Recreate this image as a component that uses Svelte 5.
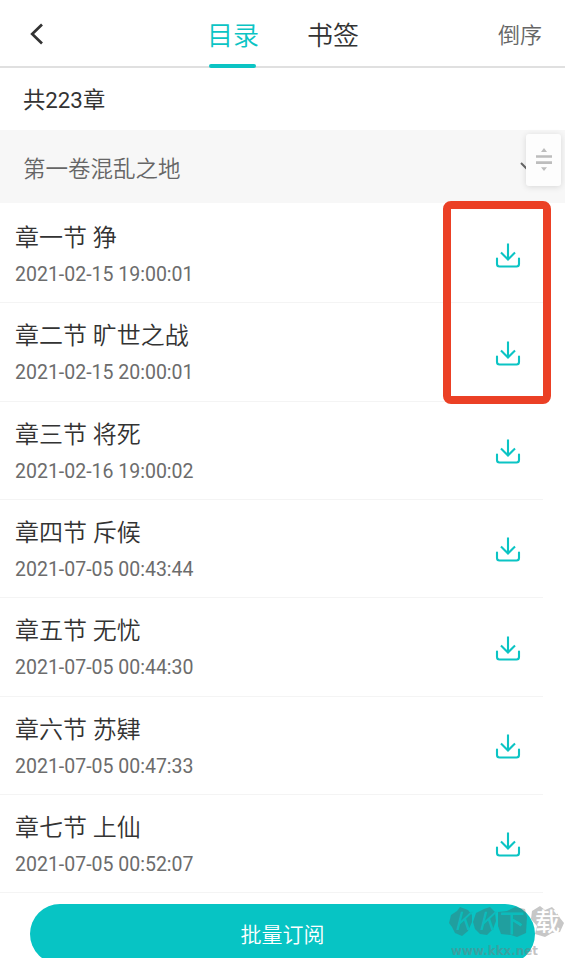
<script>
  let activeTab = $state('catalog');

  const tabs = [
    { id: 'catalog', label: '目录' },
    { id: 'bookmark', label: '书签' }
  ];

  const chapters = [
    { title: '章一节 狰', time: '2021-02-15 19:00:01' },
    { title: '章二节 旷世之战', time: '2021-02-15 20:00:01' },
    { title: '章三节 将死', time: '2021-02-16 19:00:02' },
    { title: '章四节 斥候', time: '2021-07-05 00:43:44' },
    { title: '章五节 无忧', time: '2021-07-05 00:44:30' },
    { title: '章六节 苏肄', time: '2021-07-05 00:47:33' },
    { title: '章七节 上仙', time: '2021-07-05 00:52:07' }
  ];
</script>

<div class="page">
  <header class="header">
    <button class="back" aria-label="返回">
      <svg width="14" height="22" viewBox="0 0 14 22" fill="none">
        <path d="M12 1.5L2.2 11L12 20.5" stroke="#333" stroke-width="2.7" />
      </svg>
    </button>
    <nav class="tabs">
      {#each tabs as tab}
        <button class="tab" class:active={activeTab === tab.id} onclick={() => (activeTab = tab.id)}>
          {tab.label}
        </button>
      {/each}
    </nav>
    <button class="order">倒序</button>
  </header>

  <div class="count">共223章</div>

  <div class="volume">
    <span>第一卷混乱之地</span>
    <svg class="chevron" width="18" height="10" viewBox="0 0 18 10" fill="none">
      <path d="M1 1L9 9L17 1" stroke="#666" stroke-width="2" />
    </svg>
    <div class="scroller">
      <svg width="16" height="24" viewBox="0 0 16 24" fill="#bdbdbd">
        <path d="M8 0L11 4H5zM0 7.2h16v2.6H0zM0 13.3h16v2.6H0zM5 19.2h6L8 23z" />
      </svg>
    </div>
  </div>

  <main class="list">
    {#each chapters as chapter}
      <div class="chapter">
        <div>
          <div class="title">{chapter.title}</div>
          <div class="time">{chapter.time}</div>
        </div>
        <button class="download" aria-label="下载">
          <svg width="26" height="26" viewBox="0 0 26 26" fill="none" stroke="#0bc4c4" stroke-width="2.1">
            <path d="M13 0.5V16.5M6 9.5L13 16.5L20 9.5" />
            <path d="M2 15.5V21Q2 23.5 4.5 23.5H21.5Q24 23.5 24 21V15.5" stroke-linecap="round" />
          </svg>
        </button>
      </div>
    {/each}
    <div class="highlight"></div>
  </main>

  <footer class="footer">
    <button class="subscribe">批量订阅</button>
    <div class="watermark">
      <svg width="115" height="56" viewBox="0 0 115 56">
        <g fill="#555" fill-opacity="0.33">
          <path d="M2 9L8 5L11 1L19 4L23 9L23 16L19 25L13 30L6 27L3 21L0 17z" />
          <path d="M27 7L35 3L41 1L46 6L47 15L44 23L38 29L31 28L26 23L24 16z" />
          <path d="M49 6L58 5L66 1L76 3L78 11L77 27L68 31L62 29L52 28L49 20z" />
          <path d="M83 5L91 0L96 4L103 1L107 5L111 12L115 17L111 26L103 27L96 31L86 28L88 20L82 13z" />
        </g>
        <g class="name">
          <text x="5" y="24" class="latin">K</text>
          <text x="29" y="24" class="latin">K</text>
          <text x="51" y="26">下</text>
          <text x="86" y="25" class="light">载</text>
        </g>
        <text class="site" x="2" y="49" textLength="87" lengthAdjust="spacingAndGlyphs">www.kkx.net</text>
      </svg>
    </div>
  </footer>
</div>

<style>
  :global(body) {
    background: #fff;
    overflow: hidden;
  }

  .page {
    display: flex;
    flex-direction: column;
    height: 958px;
    overflow: hidden;
    color: #333;
    font-family: Roboto, 'Noto Sans CJK SC', sans-serif;
    font-weight: 350;
  }

  button {
    padding: 0;
    border: 0;
    background: none;
    color: inherit;
    font: inherit;
  }

  .header {
    display: grid;
    grid-template-columns: 177px auto 1fr;
    align-items: stretch;
    flex: none;
    height: 66px;
    padding: 0 23px 0 30px;
    border-bottom: 2px solid #e0e0e0;
  }

  .back {
    display: flex;
    align-items: center;
    padding-top: 2px;
  }

  .tabs {
    display: flex;
    gap: 48px;
  }

  .tab {
    position: relative;
    padding-top: 1px;
    font-size: 26px;
  }

  .tab.active {
    color: #0bc4c4;
  }

  .tab.active::after {
    content: '';
    position: absolute;
    left: 2px;
    bottom: -2px;
    width: 47px;
    height: 4px;
    border-radius: 2px;
    background: #0bc4c4;
  }

  .order {
    justify-self: end;
    color: #666;
    font-size: 22px;
  }

  .count {
    flex: none;
    height: 62px;
    padding-left: 23px;
    font-size: 22.3px;
    font-weight: 400;
    line-height: 64px;
  }

  .volume {
    position: relative;
    display: flex;
    align-items: center;
    justify-content: space-between;
    flex: none;
    height: 73px;
    padding: 0 27px 0 23px;
    box-sizing: border-box;
    background: #f7f7f7;
    color: #666;
    font-size: 22.5px;
  }

  .scroller {
    position: absolute;
    top: 4px;
    right: 4px;
    display: flex;
    align-items: center;
    justify-content: center;
    width: 35px;
    height: 52px;
    border-radius: 3px;
    background: #fdfdfd;
    box-shadow: 0 1px 6px rgba(0, 0, 0, 0.13);
  }

  .list {
    position: relative;
    flex: none;
    padding-top: 2px;
  }

  .chapter {
    display: flex;
    justify-content: space-between;
    box-sizing: border-box;
    width: 543px;
    height: 98.33px;
    padding: 15px 22px 0 15px;
    border-bottom: 1px solid #f4f4f4;
  }

  .title {
    font-size: 24px;
    line-height: 37px;
  }

  .time {
    margin-top: 5px;
    color: #6c6c6c;
    font-size: 19.5px;
    font-weight: 400;
    line-height: 26px;
  }

  .download {
    align-self: flex-start;
    height: 26px;
    margin-top: 22.5px;
  }

  .download svg {
    display: block;
  }

  .highlight {
    position: absolute;
    top: -2px;
    left: 443px;
    box-sizing: border-box;
    width: 108px;
    height: 203px;
    border: 8px solid #eb4025;
    border-radius: 8px;
  }

  .footer {
    position: relative;
    flex: none;
    padding: 10.5px 30px 0;
  }

  .subscribe {
    width: 505px;
    height: 60px;
    padding-bottom: 2px;
    border-radius: 30px;
    background: #07c4c4;
    color: #fff;
    font-size: 21px;
  }

  .watermark {
    position: absolute;
    top: 13px;
    left: 449px;
  }

  .watermark svg {
    display: block;
    overflow: visible;
  }

  .name {
    fill: #0bbcbc;
    font-family: 'Noto Sans CJK SC', sans-serif;
    font-size: 25px;
    font-weight: 500;
  }

  .name .latin {
    font-size: 25px;
    font-style: italic;
    font-weight: 400;
  }

  .name .light {
    fill: #fff;
    font-weight: 500;
  }

  .site {
    fill: #777;
    fill-opacity: 0.45;
    font-family: 'DejaVu Sans', sans-serif;
    font-size: 12px;
    font-weight: 700;
  }
</style>
